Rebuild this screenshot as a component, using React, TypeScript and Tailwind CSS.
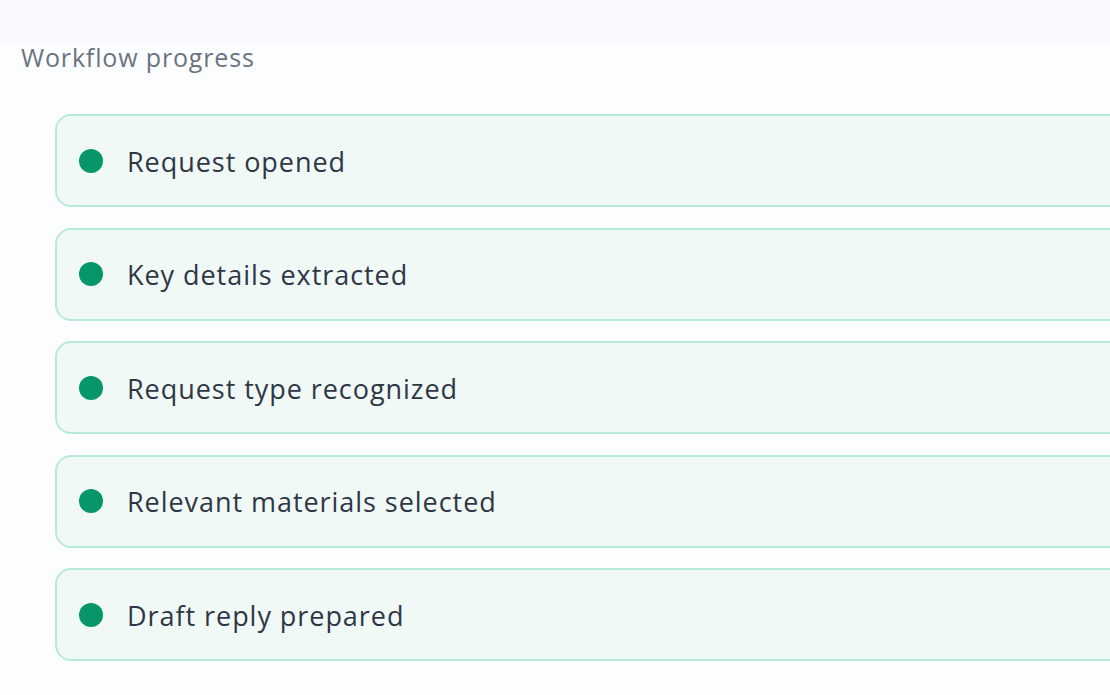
const steps = [
  'Request opened',
  'Key details extracted',
  'Request type recognized',
  'Relevant materials selected',
  'Draft reply prepared',
];

export default function App() {
  return (
    <div className="w-[1110px] h-[695px] overflow-hidden bg-[#fcfdfe] font-['Open_Sans',sans-serif]">
      <div className="h-[43px] bg-[#f8f9fc]" />
      <div className="pl-[21px]">
        <h2 className="text-[25px] leading-[28px] tracking-[0.85px] text-[#6b7280]">Workflow progress</h2>
      </div>
      <ul className="mt-[43px] ml-[55px] w-[1120px] flex flex-col gap-[20.5px]">
        {steps.map((step) => (
          <li
            key={step}
            className="h-[93px] flex items-center gap-[24px] pl-[22px] rounded-[16px] border-2 border-[#b8ebd7] bg-[#f1f9f6]"
          >
            <span className="w-[24px] h-[24px] rounded-full bg-[#079669] shrink-0" />
            <span className="text-[27px] tracking-[0.95px] font-medium text-[#2f3746] mt-[3px]">{step}</span>
          </li>
        ))}
      </ul>
    </div>
  );
}
